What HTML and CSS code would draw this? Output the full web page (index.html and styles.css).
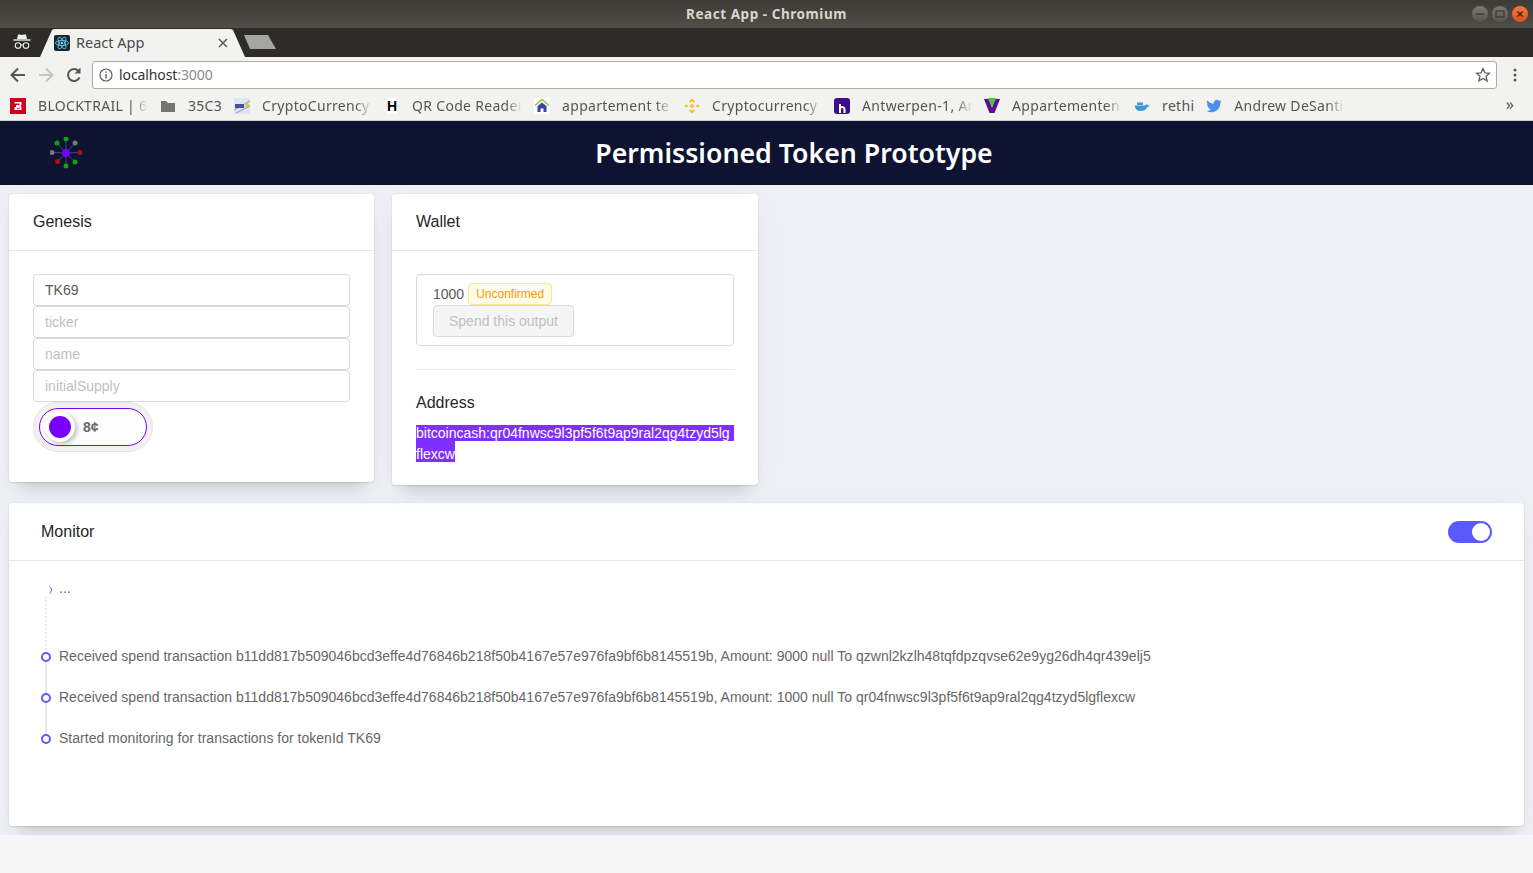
FILE: index.html
```html
<!DOCTYPE html>
<html lang="en">
<head>
<meta charset="utf-8">
<title>React App</title>
<link rel="stylesheet" href="styles.css">
</head>
<body>
<div class="titlebar">
  <span class="win-title">React App - Chromium</span>
  <div class="win-btns">
    <span class="win-btn"><svg width="16" height="16" viewBox="0 0 16 16"><path d="M4 8h8" stroke="#3a3a36" stroke-width="1.3"/></svg></span>
    <span class="win-btn"><svg width="16" height="16" viewBox="0 0 16 16"><rect x="4" y="5" width="8" height="6" fill="none" stroke="#3a3a36" stroke-width="1.2"/></svg></span>
    <span class="win-btn win-close"><svg width="16" height="16" viewBox="0 0 16 16"><path d="M5.5 5.5l5 5M10.5 5.500l-5 5" stroke="#4a1d08" stroke-width="1.3"/></svg></span>
  </div>
</div>
<div class="tabbar">
  <svg class="incognito" width="20" height="18" viewBox="0 0 20 18"><path d="M6 1.500h2l2 .6 2-.6h2l1 4.500H5z" fill="#eee"/><path d="M1.500 7h17" stroke="#eee" stroke-width="1.400"/><circle cx="6" cy="12.500" r="2.800" fill="none" stroke="#eee" stroke-width="1.100"/><circle cx="14" cy="12.500" r="2.800" fill="none" stroke="#eee" stroke-width="1.100"/><path d="M9 12h2" stroke="#eee"/></svg>
  <div class="tab">
    <svg class="tab-shape" width="206" height="29" viewBox="0 0 206 29"><path d="M0 29 L12 2 Q13 1 15 1 H190 Q192 1 193 2 L205 29Z" fill="#f2f2f0"/></svg>
    <svg class="tab-fav" width="16" height="16" viewBox="0 0 16 16"><rect width="16" height="16" rx="2" fill="#20232a"/><g fill="none" stroke="#61dafb" stroke-width=".8"><ellipse cx="8" cy="8" rx="6.500" ry="2.600"/><ellipse cx="8" cy="8" rx="6.500" ry="2.600" transform="rotate(60 8 8)"/><ellipse cx="8" cy="8" rx="6.500" ry="2.600" transform="rotate(120 8 8)"/></g><circle cx="8" cy="8" r="1.300" fill="#61dafb"/></svg>
    <span class="tab-label">React App</span>
    <svg class="tab-x" width="10" height="10" viewBox="0 0 10 10"><path d="M1 1l8 8M9 1l-8 8" stroke="#5c5c5c" stroke-width="1.500"/></svg>
  </div>
  <svg class="newtab" width="34" height="16" viewBox="0 0 34 16"><path d="M0 1 H24 L32 15 H6Z" fill="#a5a5a5"/></svg>
</div>
<div class="toolbar">
  <svg class="tool" width="18" height="18" viewBox="0 0 18 18"><path d="M16 9H3M9 2.500L2.500 9 9 15.500" fill="none" stroke="#555" stroke-width="2"/></svg>
  <svg class="tool" width="18" height="18" viewBox="0 0 18 18"><path d="M2 9h13M9 2.500L15.500 9 9 15.500" fill="none" stroke="#c4c4c4" stroke-width="2"/></svg>
  <svg class="tool" width="18" height="18" viewBox="0 0 18 18"><path d="M14.500 11.500A6 6 0 1 1 13.500 5" fill="none" stroke="#555" stroke-width="2"/><path d="M15.500 1.500v6h-6z" fill="#555"/></svg>
  <div class="omnibox">
    <svg width="14" height="14" viewBox="0 0 14 14"><circle cx="7" cy="7" r="6" fill="none" stroke="#5a5a5a" stroke-width="1.200"/><path d="M7 6v4.500M7 3.500v1.300" stroke="#5a5a5a" stroke-width="1.400"/></svg>
    <span class="url">localhost<span class="url-port">:3000</span></span>
    <svg class="star" width="16" height="16" viewBox="0 0 16 16"><path d="M8 1.500l1.900 4.300 4.600.4-3.500 3 1.100 4.600L8 11.400l-4.100 2.400L5 9.200l-3.500-3 4.600-.4z" fill="none" stroke="#5f5f5f" stroke-width="1.300"/></svg>
  </div>
  <svg class="menu" width="4" height="14" viewBox="0 0 4 14"><circle cx="2" cy="2" r="1.500" fill="#555"/><circle cx="2" cy="7" r="1.500" fill="#555"/><circle cx="2" cy="12" r="1.500" fill="#555"/></svg>
</div>
<div class="bookmarks">
  <div class="bm"><svg width="16" height="16" viewBox="0 0 16 16"><rect width="16" height="16" fill="#d0021b"/><path d="M4.500 4h7v3l-1 1 1 1v3h-7V9h4.500v1.200H7V11h2.500V9.500H6V7h3.500V5.500H4.500z" fill="#fff"/></svg><span class="bm-text bm-fade">BLOCKTRAIL | 61</span></div>
  <div class="bm"><svg width="16" height="16" viewBox="0 0 16 16"><path d="M1 3h5l2 2h7v9H1z" fill="#757575"/></svg><span class="bm-text">35C3</span></div>
  <div class="bm"><svg width="16" height="16" viewBox="0 0 16 16"><rect width="16" height="16" fill="#dfe3f2"/><path d="M0 12L16 3M2 15L16 8" stroke="#8d96c9"/><rect x="1" y="6" width="9" height="4" fill="#45509a"/><circle cx="13" cy="7" r="2" fill="#e3c436"/></svg><span class="bm-text bm-fade">CryptoCurrency</span></div>
  <div class="bm"><span class="h-icon">H</span><span class="bm-text bm-fade">QR Code Reader</span></div>
  <div class="bm"><svg width="16" height="16" viewBox="0 0 16 16"><rect width="16" height="16" fill="#fff"/><path d="M1 7.500L8 1.500l7 6" fill="none" stroke="#8cc63f" stroke-width="1.500"/><path d="M3.500 8L8 4.500 12.500 8v6H3.500zM6.500 14v-3.500h3V14z" fill="#3d45a5" fill-rule="evenodd"/></svg><span class="bm-text bm-fade">appartement te</span></div>
  <div class="bm"><svg width="16" height="16" viewBox="0 0 16 16" fill="#f0c419"><path d="M8 .5l3 3-1.300 1.300L8 3.100 6.300 4.800 5 3.500zM8 15.500l-3-3 1.300-1.300L8 12.900l1.700-1.700 1.300 1.300zM.5 8L2.300 6.200 4.100 8 2.300 9.800zM15.500 8l-1.800 1.800L11.900 8l1.800-1.800zM8 5.700L10.300 8 8 10.300 5.700 8z"/></svg><span class="bm-text bm-fade">Cryptocurrency</span></div>
  <div class="bm"><svg width="16" height="16" viewBox="0 0 16 16"><rect width="16" height="16" rx="3" fill="#3a0e8c"/><path d="M6 6v9M6 10c2-1.500 4.500-1 4.500 1v4" fill="none" stroke="#fff" stroke-width="2"/></svg><span class="bm-text bm-fade">Antwerpen-1, An</span></div>
  <div class="bm"><svg width="16" height="16" viewBox="0 0 16 16"><path d="M0 1h5l3 9 3-9h5L10.500 15h-5z" fill="#5c0f8b"/><path d="M3.500 0h9L8 9z" fill="#4cc24a"/></svg><span class="bm-text bm-fade">Appartementen</span></div>
  <div class="bm"><svg width="16" height="16" viewBox="0 0 16 16"><path d="M.5 7.500h11c.5-1 1-1.500 1.500-1.500.3.500.5 1 .5 1.300.8-.2 1.500 0 2 .4-.5 1-1.500 1.300-2.400 1.300C12 12 9.500 13 6.500 13 3 13 1 11 .5 7.500z" fill="#3a9bd8"/><path d="M3 4.500h6v2.500H3z" fill="#3a9bd8"/></svg><span class="bm-text">rethi</span></div>
  <div class="bm"><svg width="16" height="16" viewBox="0 0 16 16"><path d="M15.500 3.300c-.6.300-1.200.4-1.800.5.600-.4 1.100-1 1.400-1.700-.6.400-1.300.6-2 .8A3.100 3.100 0 0 0 7.800 5.700 9 9 0 0 1 1.400 2.400a3.100 3.100 0 0 0 1 4.200c-.5 0-1-.2-1.400-.4 0 1.500 1 2.800 2.500 3.100-.5.100-.9.100-1.400 0 .4 1.200 1.600 2.100 2.900 2.200A6.300 6.300 0 0 1 .5 12.800a9 9 0 0 0 13.800-8c.5-.4 1-.9 1.200-1.500z" fill="#4a90e8"/></svg><span class="bm-text bm-fade">Andrew DeSanti</span></div>
  <span class="bm-more">»</span>
</div>
<header class="app-header">
  <svg class="logo" width="32" height="32" viewBox="0 0 32 32">
    <g stroke="#3d4a78" stroke-width="1"><path d="M16 16L16 2M16 16L7 6M16 16L25 6M16 16L30 15.500M16 16L2 15.500M16 16L7.500 24.500M16 16L16 29M16 16L25 25"/></g>
    <circle cx="16" cy="2" r="2.500" fill="#0fa30f"/><circle cx="7" cy="6" r="2.500" fill="#0fa30f"/><circle cx="25" cy="6" r="2.500" fill="#77777f"/><circle cx="30" cy="15.500" r="2.500" fill="#b20c14"/><circle cx="2" cy="15.500" r="2.500" fill="#77777f"/><circle cx="7.500" cy="24.500" r="2.500" fill="#b20c14"/><circle cx="16" cy="29" r="2.500" fill="#0fa30f"/><circle cx="25" cy="25" r="2.500" fill="#0fa30f"/><circle cx="16" cy="16" r="4" fill="#7700ff"/>
  </svg>
  <h1 class="app-title">Permissioned Token Prototype</h1>
</header>
<main class="content">
  <div class="card-row">
    <section class="card card-genesis">
      <div class="card-head">Genesis</div>
      <div class="card-body">
        <input class="field" type="text" value="TK69" aria-label="tokenId">
        <input class="field" type="text" placeholder="ticker">
        <input class="field" type="text" placeholder="name">
        <input class="field" type="text" placeholder="initialSupply">
        <div class="coin-toggle">
          <div class="coin-inner">
            <span class="coin-knob"><span class="coin-dot"></span></span>
            <span class="coin-label">8¢</span>
          </div>
        </div>
      </div>
    </section>
    <section class="card card-wallet">
      <div class="card-head">Wallet</div>
      <div class="card-body wallet-body">
        <div class="output">
          <div class="output-line"><span>1000</span><span class="tag">Unconfirmed</span></div>
          <button class="spend" disabled>Spend this output</button>
        </div>
        <hr class="divider">
        <div class="addr-title">Address</div>
        <div class="addr">
          <span class="addr-1">bitcoincash:qr04fnwsc9l3pf5f6t9ap9ral2qg4tzyd5lg</span>
          <span class="addr-2">flexcw</span>
        </div>
      </div>
    </section>
  </div>
  <section class="card card-monitor">
    <div class="card-head monitor-head">
      <span>Monitor</span>
      <span class="switch"><span class="switch-knob"></span></span>
    </div>
    <ul class="timeline">
      <li class="tl-item tl-pending"><svg class="tl-spin" width="6" height="10" viewBox="0 0 6 10"><path d="M1.500 1.500C4 3 4 7 1.500 8.500" fill="none" stroke="#5b5bff" stroke-width="1"/></svg>...</li>
      <li class="tl-item tl-line">Received spend transaction b11dd817b509046bcd3effe4d76846b218f50b4167e57e976fa9bf6b8145519b, Amount: 9000 null To qzwnl2kzlh48tqfdpzqvse62e9yg26dh4qr439elj5</li>
      <li class="tl-item tl-line">Received spend transaction b11dd817b509046bcd3effe4d76846b218f50b4167e57e976fa9bf6b8145519b, Amount: 1000 null To qr04fnwsc9l3pf5f6t9ap9ral2qg4tzyd5lgflexcw</li>
      <li class="tl-item">Started monitoring for transactions for tokenId TK69</li>
    </ul>
  </section>
</main>
<footer class="foot"></footer>
</body>
</html>
```
FILE: styles.css
```css
* { box-sizing: border-box; }
html, body { margin: 0; padding: 0; height: 873px; overflow: hidden; }
body { font-family: "Liberation Sans", Arial, sans-serif; font-size: 14px; color: #595959; background: #f6f6f6; }

.titlebar { height: 28px; background: linear-gradient(#3c3b37, #4f4e47); display: flex; align-items: center; justify-content: center; position: relative; }
.win-title { font-family: "Noto Sans", sans-serif; font-weight: 700; font-size: 13.5px; letter-spacing: .55px; color: #d9d5cc; }
.win-btns { position: absolute; right: 5px; top: 6px; display: flex; gap: 4px; }
.win-btn { width: 16px; height: 16px; border-radius: 50%; background: linear-gradient(#7b7a74, #55544e); display: block; }
.win-close { background: linear-gradient(#f47a3c, #d9501e); }
.win-btn svg { display: block; }

.tabbar { height: 29px; background: #2d2c29; display: flex; align-items: flex-end; padding-left: 12px; position: relative; }
.incognito { margin-bottom: 6px; flex: none; }
.tab { width: 206px; height: 29px; margin-left: 8px; position: relative; display: flex; align-items: center; padding-left: 14px; flex: none; }
.tab-shape { position: absolute; left: 0; top: 0; }
.tab-fav, .tab-label, .tab-x { position: relative; }
.tab-label { font-family: "Noto Sans", sans-serif; font-size: 14.5px; line-height: 20px; padding-bottom: 2px; color: #4a4a4a; margin-left: 6px; width: 142px; }
.newtab { margin: 0 0 7px -2px; flex: none; }

.toolbar { height: 35px; background: #f2f2f0; display: flex; align-items: center; padding-left: 9px; }
.tool { margin-right: 10px; flex: none; }
.omnibox { width: 1405px; height: 28px; margin-left: -1px; background: #fff; border: 1px solid #ababab; border-radius: 3px; display: flex; align-items: center; padding: 0 5px 0 6px; gap: 6px; }
.url { font-family: "Noto Sans", sans-serif; font-size: 14px; color: #333; flex: 1; letter-spacing: -.1px; }
.url-port { color: #8a8a8a; }
.menu { margin-left: 16px; flex: none; }

.bookmarks { height: 29px; background: #f2f2f0; border-bottom: 1px solid #cfcfcf; display: flex; align-items: center; padding-left: 10px; gap: 12px; position: relative; }
.bm { display: flex; align-items: center; gap: 12px; flex: none; }
.bm svg { display: block; flex: none; }
.bm-text { font-family: "Noto Sans", sans-serif; font-size: 14px; line-height: 18px; padding-bottom: 1px; letter-spacing: .3px; color: #555; white-space: nowrap; }
.bm-fade { width: 110px; overflow: hidden; -webkit-mask-image: linear-gradient(to right, #000 85%, transparent); mask-image: linear-gradient(to right, #000 85%, transparent); }
.h-icon { width: 16px; height: 16px; padding: 0 3px; background: #fff content-box; color: #000; font-family: "Liberation Sans", sans-serif; font-weight: 700; font-size: 14px; line-height: 16px; text-align: center; }
.bm-more { position: absolute; right: 19px; top: 1px; font-size: 16px; color: #555; font-family: "Noto Sans", sans-serif; }

.app-header { height: 64px; background: #0d1330; display: flex; align-items: center; padding-left: 50px; }
.logo { flex: none; }
.app-title { flex: 1; margin: 0 27px 2px 0; text-align: center; font-family: "Noto Sans", sans-serif; font-weight: 600; font-size: 26.7px; color: #fff; }

.content { height: 650px; background: #eff0f5; padding: 9px 9px 0; overflow: hidden; }
.card-row { display: flex; align-items: flex-start; gap: 18px; margin-bottom: 18px; }
.card { background: #fff; border-radius: 3px; box-shadow: 0 0 1px rgba(4,9,20,.2), 0 1px 2px rgba(4,9,20,.08), 0 14px 16px -10px rgba(4,9,20,.16), 0 7px 35px rgba(4,9,20,.03); }
.card-genesis { width: 365px; }
.card-wallet { width: 366px; }
.card-head { height: 57px; border-bottom: 1px solid #e8e8e8; padding-left: 24px; font-size: 16px; line-height: 56px; color: #262626; }
.card-body { padding: 23px 24px 30px; }
.wallet-body { padding-bottom: 23px; }

.field { display: block; width: 100%; height: 32px; border: 1px solid #d9d9d9; border-radius: 4px; padding: 0 11px; font: 14px "Liberation Sans", sans-serif; color: #595959; background: #fff; }
.field::placeholder { color: #bfbfbf; opacity: 1; }

.coin-toggle { width: 120px; height: 50px; border-radius: 25px; background: #f3f0f0; border: 1px solid #e6e2e2; padding: 5px; }
.coin-inner { height: 38px; border-radius: 19px; background: #fcfcfc; border: 1px solid #7700ff; display: flex; align-items: center; padding-left: 5px; }
.coin-knob { width: 30px; height: 30px; border-radius: 50%; background: #fff; box-shadow: 2px 2px 4px rgba(0,0,0,.25); display: flex; align-items: center; justify-content: center; }
.coin-dot { width: 22px; height: 22px; border-radius: 50%; background: #7700ff; }
.coin-label { margin-left: 8px; font-weight: 700; font-size: 14px; color: #666; }

.output { height: 72px; border: 1px solid #d9d9d9; border-radius: 4px; padding: 8px 16px 0; }
.output-line { height: 22px; display: flex; align-items: center; }
.tag { margin-left: 4px; height: 22px; padding: 0 7px; font-size: 12px; line-height: 20px; color: #fa9a14; background: #fffbe6; border: 1px solid #ffe58f; border-radius: 4px; }
.spend { display: block; width: 141px; height: 32px; padding: 0; font: 14px "Liberation Sans", sans-serif; color: #bfbfbf; background: #f5f5f5; border: 1px solid #d9d9d9; border-radius: 4px; }
.divider { height: 1px; border: 0; background: #e8e8e8; margin: 23px 0 21px; }
.addr-title { font-size: 16px; line-height: 24px; color: #262626; margin-bottom: 10px; }
.addr { color: #fff; font-size: 14px; }
.addr-1 { display: block; height: 16px; line-height: 16px; background: #7f2fff; white-space: nowrap; }
.addr-2 { display: block; width: 39px; height: 21px; line-height: 26px; background: #7f2fff; }

.card-monitor { height: 323px; }
.monitor-head { display: flex; justify-content: space-between; align-items: center; height: 58px; padding: 1px 32px 0; line-height: normal; }
.switch { width: 44px; height: 22px; border-radius: 11px; background: #5a5aff; display: block; position: relative; }
.switch-knob { position: absolute; right: 2px; top: 2px; width: 18px; height: 18px; border-radius: 50%; background: #fff; }

.timeline { list-style: none; margin: 0; padding: 17px 32px 0; }
.tl-item { height: 41px; padding-left: 18px; line-height: 21px; letter-spacing: .012px; position: relative; color: #666; white-space: nowrap; }
.tl-item::before { content: ""; box-sizing: border-box; position: absolute; left: 0; top: 6px; width: 10px; height: 10px; border: 2px solid #5a5aff; border-radius: 50%; background: #fff; z-index: 1; }
.tl-line::after { content: ""; position: absolute; left: 4px; top: 11px; width: 2px; height: 41px; background: #e8e8e8; }
.tl-pending { height: 68px; }
.tl-pending::before { display: none; }
.tl-pending::after { content: ""; position: absolute; left: 4px; top: 19px; height: 53px; border-left: 2px dotted #e8e8e8; }
.tl-spin { position: absolute; left: 7px; top: 7px; }

.foot { height: 38px; background: #f6f6f6; }
```
